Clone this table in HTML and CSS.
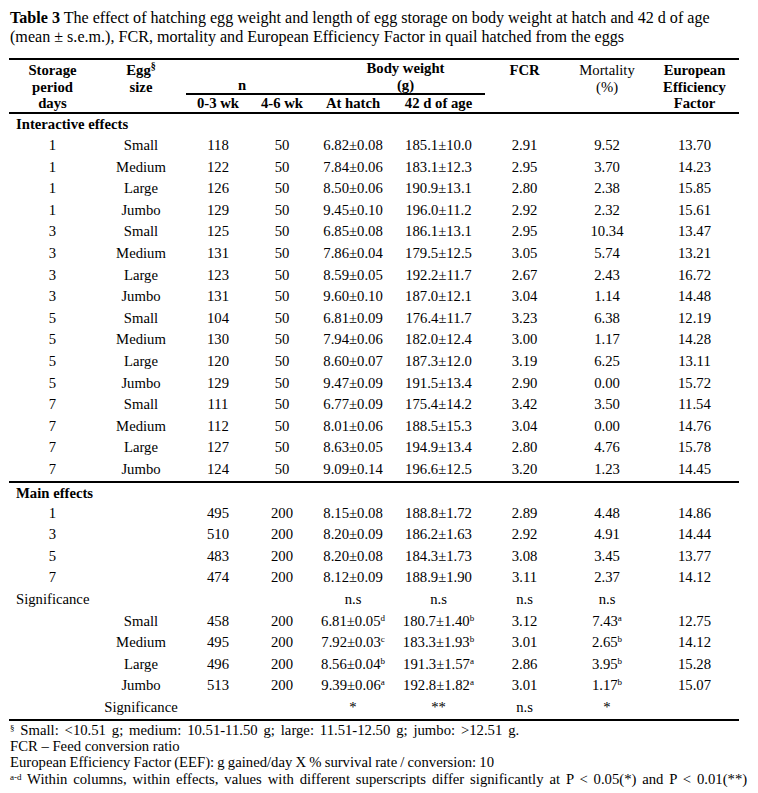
FILE: index.html
```html
<!DOCTYPE html>
<html>
<head>
<meta charset="utf-8">
<link rel="stylesheet" href="styles.css">
</head>
<body>
<div class="page">
  <p class="caption"><b>Table 3</b> The effect of hatching egg weight and length of egg storage on body weight at hatch and 42 d of age<br>(mean ± s.e.m.), FCR, mortality and European Efficiency Factor in quail hatched from the eggs</p>
  <table class="data">
    <colgroup>
      <col class="c1"><col class="c2"><col class="c3"><col class="c4"><col class="c5"><col class="c6"><col class="c7"><col class="c8"><col class="c9">
    </colgroup>
    <thead>
      <tr>
        <th rowspan="2">Storage<br>period<br>days</th>
        <th rowspan="2">Egg<sup>§</sup><br>size</th>
        <th colspan="2" class="group n"><br>n</th>
        <th colspan="2" class="group bw">Body weight<br>(g)</th>
        <th rowspan="2">FCR</th>
        <th rowspan="2" class="norm">Mortality<br>(%)</th>
        <th rowspan="2">European<br>Efficiency<br>Factor</th>
      </tr>
      <tr class="sub">
        <th>0-3 wk</th><th>4-6 wk</th><th>At hatch</th><th>42 d of age</th>
      </tr>
    </thead>
    <tbody>
      <tr class="section first"><td colspan="9">Interactive effects</td></tr>
      <tr><td>1</td><td>Small</td><td>118</td><td>50</td><td>6.82±0.08</td><td>185.1±10.0</td><td>2.91</td><td>9.52</td><td>13.70</td></tr>
      <tr><td>1</td><td>Medium</td><td>122</td><td>50</td><td>7.84±0.06</td><td>183.1±12.3</td><td>2.95</td><td>3.70</td><td>14.23</td></tr>
      <tr><td>1</td><td>Large</td><td>126</td><td>50</td><td>8.50±0.06</td><td>190.9±13.1</td><td>2.80</td><td>2.38</td><td>15.85</td></tr>
      <tr><td>1</td><td>Jumbo</td><td>129</td><td>50</td><td>9.45±0.10</td><td>196.0±11.2</td><td>2.92</td><td>2.32</td><td>15.61</td></tr>
      <tr><td>3</td><td>Small</td><td>125</td><td>50</td><td>6.85±0.08</td><td>186.1±13.1</td><td>2.95</td><td>10.34</td><td>13.47</td></tr>
      <tr><td>3</td><td>Medium</td><td>131</td><td>50</td><td>7.86±0.04</td><td>179.5±12.5</td><td>3.05</td><td>5.74</td><td>13.21</td></tr>
      <tr><td>3</td><td>Large</td><td>123</td><td>50</td><td>8.59±0.05</td><td>192.2±11.7</td><td>2.67</td><td>2.43</td><td>16.72</td></tr>
      <tr><td>3</td><td>Jumbo</td><td>131</td><td>50</td><td>9.60±0.10</td><td>187.0±12.1</td><td>3.04</td><td>1.14</td><td>14.48</td></tr>
      <tr><td>5</td><td>Small</td><td>104</td><td>50</td><td>6.81±0.09</td><td>176.4±11.7</td><td>3.23</td><td>6.38</td><td>12.19</td></tr>
      <tr><td>5</td><td>Medium</td><td>130</td><td>50</td><td>7.94±0.06</td><td>182.0±12.4</td><td>3.00</td><td>1.17</td><td>14.28</td></tr>
      <tr><td>5</td><td>Large</td><td>120</td><td>50</td><td>8.60±0.07</td><td>187.3±12.0</td><td>3.19</td><td>6.25</td><td>13.11</td></tr>
      <tr><td>5</td><td>Jumbo</td><td>129</td><td>50</td><td>9.47±0.09</td><td>191.5±13.4</td><td>2.90</td><td>0.00</td><td>15.72</td></tr>
      <tr><td>7</td><td>Small</td><td>111</td><td>50</td><td>6.77±0.09</td><td>175.4±14.2</td><td>3.42</td><td>3.50</td><td>11.54</td></tr>
      <tr><td>7</td><td>Medium</td><td>112</td><td>50</td><td>8.01±0.06</td><td>188.5±15.3</td><td>3.04</td><td>0.00</td><td>14.76</td></tr>
      <tr><td>7</td><td>Large</td><td>127</td><td>50</td><td>8.63±0.05</td><td>194.9±13.4</td><td>2.80</td><td>4.76</td><td>15.78</td></tr>
      <tr class="end"><td>7</td><td>Jumbo</td><td>124</td><td>50</td><td>9.09±0.14</td><td>196.6±12.5</td><td>3.20</td><td>1.23</td><td>14.45</td></tr>
      <tr class="section main"><td colspan="9">Main effects</td></tr>
      <tr><td>1</td><td></td><td>495</td><td>200</td><td>8.15±0.08</td><td>188.8±1.72</td><td>2.89</td><td>4.48</td><td>14.86</td></tr>
      <tr><td>3</td><td></td><td>510</td><td>200</td><td>8.20±0.09</td><td>186.2±1.63</td><td>2.92</td><td>4.91</td><td>14.44</td></tr>
      <tr><td>5</td><td></td><td>483</td><td>200</td><td>8.20±0.08</td><td>184.3±1.73</td><td>3.08</td><td>3.45</td><td>13.77</td></tr>
      <tr><td>7</td><td></td><td>474</td><td>200</td><td>8.12±0.09</td><td>188.9±1.90</td><td>3.11</td><td>2.37</td><td>14.12</td></tr>
      <tr><td colspan="2" class="left">Significance</td><td></td><td></td><td>n.s</td><td>n.s</td><td>n.s</td><td>n.s</td><td></td></tr>
      <tr><td></td><td>Small</td><td>458</td><td>200</td><td>6.81±0.05<sup>d</sup></td><td>180.7±1.40<sup>b</sup></td><td>3.12</td><td>7.43<sup>a</sup></td><td>12.75</td></tr>
      <tr><td></td><td>Medium</td><td>495</td><td>200</td><td>7.92±0.03<sup>c</sup></td><td>183.3±1.93<sup>b</sup></td><td>3.01</td><td>2.65<sup>b</sup></td><td>14.12</td></tr>
      <tr><td></td><td>Large</td><td>496</td><td>200</td><td>8.56±0.04<sup>b</sup></td><td>191.3±1.57<sup>a</sup></td><td>2.86</td><td>3.95<sup>b</sup></td><td>15.28</td></tr>
      <tr><td></td><td>Jumbo</td><td>513</td><td>200</td><td>9.39±0.06<sup>a</sup></td><td>192.8±1.82<sup>a</sup></td><td>3.01</td><td>1.17<sup>b</sup></td><td>15.07</td></tr>
      <tr class="end"><td></td><td>Significance</td><td></td><td></td><td>*</td><td>**</td><td>n.s</td><td>*</td><td></td></tr>
    </tbody>
  </table>
  <div class="notes">
    <p class="wide"><sup>§</sup> Small: &lt;10.51 g; medium: 10.51-11.50 g; large: 11.51-12.50 g; jumbo: &gt;12.51 g.</p>
    <p>FCR – Feed conversion ratio</p>
    <p class="tight">European Efficiency Factor (EEF): g gained/day X % survival rate / conversion: 10</p>
    <p class="wide"><sup>a-d</sup> Within columns, within effects, values with different superscripts differ significantly at P &lt; 0.05(*) and P &lt; 0.01(**)</p>
  </div>
</div>
</body>
</html>
```

FILE: styles.css
```css
html, body {
  margin: 0;
  padding: 0;
  background: #fff;
}
body {
  font-family: "Liberation Serif", "Times New Roman", serif;
  font-size: 14.7px;
  color: #000;
}
.page {
  padding: 8px 0 0 9px;
}
.caption {
  margin: 0 0 0 1px;
  font-size: 16.1px;
  line-height: 19px;
  white-space: nowrap;
}
.data {
  width: 730px;
  table-layout: fixed;
  border-collapse: collapse;
  margin-top: 12px;
  border-top: 2px solid #000;
}
.c1 { width: 87px; }
.c2 { width: 90px; }
.c3 { width: 64px; }
.c4 { width: 64px; }
.c5 { width: 78px; }
.c6 { width: 93px; }
.c7 { width: 79px; }
.c8 { width: 86px; }
.c9 { width: 89px; }

th {
  font-weight: bold;
  line-height: 16.5px;
  padding: 2px 0 0;
  vertical-align: top;
  text-align: center;
  white-space: nowrap;
}
th.norm { font-weight: normal; }
th.group { border-bottom: 2px solid #000; padding-top: 0; }
th.n { padding-right: 16px; }
th.bw { padding-left: 12px; }
tr.sub th { padding-top: 0; }
thead { border-bottom: 2px solid #000; }

td {
  padding: 0;
  height: 21.6px;
  line-height: 21.6px;
  text-align: center;
  vertical-align: middle;
  white-space: nowrap;
}
td.left { text-align: left; padding-left: 7px; }
tr.section td {
  text-align: left;
  font-weight: bold;
  padding-left: 7px;
}
tr.main td { height: 20px; line-height: 20px; }
tr.end td { border-bottom: 2px solid #000; }

sup {
  font-size: 9px;
  line-height: 0;
  vertical-align: 5px;
}
th sup { font-size: 10px; vertical-align: 6px; }

.notes {
  margin-top: 1px;
  line-height: 16.4px;
}
.notes p { margin: 0 0 0 1px; white-space: nowrap; }
.notes .wide { word-spacing: 2.2px; }
.notes .tight { word-spacing: -0.5px; }
.notes sup { vertical-align: 4px; }
```
